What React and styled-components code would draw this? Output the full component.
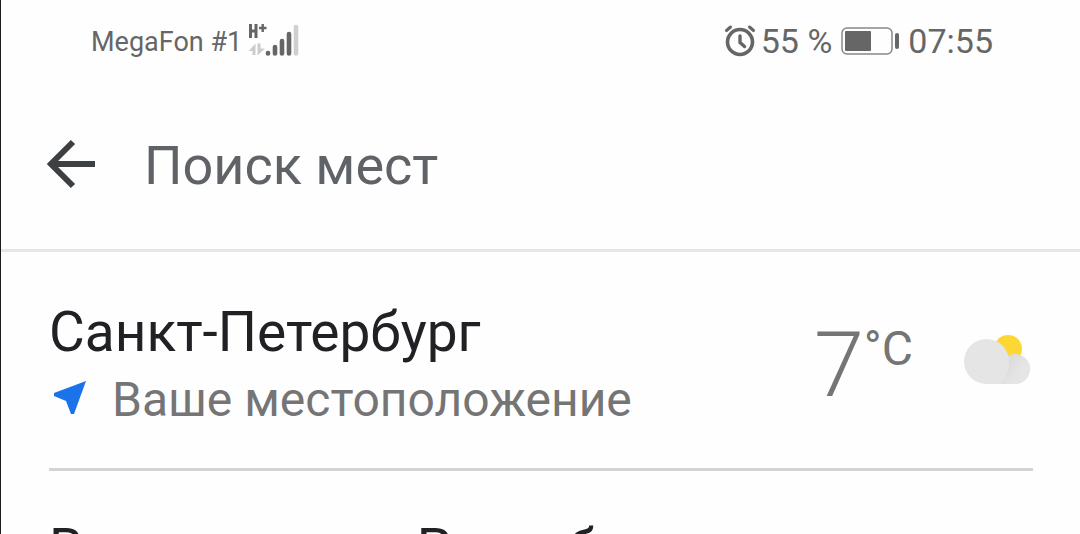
import React from "react";
import styled, { createGlobalStyle } from "styled-components";

const GlobalStyle = createGlobalStyle`
  * {
    box-sizing: border-box;
  }
  body {
    margin: 0;
    background: #fefefe;
    font-family: Roboto, sans-serif;
    overflow: hidden;
  }
`;

const Container = styled.div`
  height: 100vh;
  overflow: hidden;
  border-left: 1px solid #1b1b1b;
`;

const StatusBar = styled.div`
  display: flex;
  justify-content: space-between;
  align-items: center;
  height: 80px;
  padding: 2px 87px 0 90px;
  color: #666;
`;

const StatusGroup = styled.div`
  display: flex;
  align-items: center;
  gap: ${(props) => props.$gap}px;
`;

const Carrier = styled.span`
  padding-top: 2px;
  font-size: 27px;
`;

const StatusText = styled.span`
  font-size: 34px;
`;

const Header = styled.header`
  display: flex;
  align-items: center;
  gap: 48px;
  height: 172px;
  padding: 0 48px 2px 45px;
  border-bottom: 3px solid #e6e6e6;
`;

const BackButton = styled.button`
  display: flex;
  padding: 0;
  border: none;
  background: none;
`;

const SearchInput = styled.input`
  flex: 1;
  min-width: 0;
  padding: 4px 0 0;
  border: none;
  outline: none;
  background: none;
  font-family: Roboto, sans-serif;
  font-size: 54px;
  color: #5f6368;
  &::placeholder {
    color: #5f6368;
    opacity: 1;
  }
`;

const PlaceList = styled.main`
  padding: 0 47px 0 48px;
`;

const Place = styled.section`
  display: flex;
  justify-content: space-between;
  height: 219px;
  padding-top: 46px;
  border-bottom: 3px solid #d4d4d4;
`;

const Title = styled.h2`
  margin: 0;
  font-size: 55px;
  line-height: 68px;
  font-weight: 400;
  color: #202124;
  white-space: nowrap;
`;

const Location = styled.div`
  display: flex;
  align-items: center;
  gap: 25px;
  padding-left: 4px;
  font-size: 48px;
  line-height: 68px;
  color: #757575;
`;

const Weather = styled.div`
  display: flex;
  align-items: flex-start;
  padding-right: 2px;
  color: #757575;
`;

const Degrees = styled.span`
  font-size: 90px;
  line-height: 136px;
  font-weight: 300;
`;

const Unit = styled.span`
  font-size: 48px;
  line-height: 102px;
`;

const WeatherIcon = styled.svg`
  margin: 36px 0 0 50px;
`;

const NextPlace = styled.section`
  padding-top: 44px;
`;

const App = () => {
  return (
    <Container>
      <GlobalStyle />
      <StatusBar>
        <StatusGroup $gap={6}>
          <Carrier>MegaFon #1</Carrier>
          <svg width="51" height="36" viewBox="0 0 51 36" fill="none">
            <path d="M2.500 1V15M8 1V15M3 8H8" stroke="#666" strokeWidth="3" />
            <path d="M11 5H18.500M14.700 1V9" stroke="#666" strokeWidth="2.400" />
            <path d="M0.500 28L7.500 20.500V32H4.500V28ZM9.500 20.500H12.500V25.500H17L9.500 32.500Z" fill="#ccc" />
            <g stroke="#666" strokeWidth="4.600" strokeLinecap="round">
              <path d="M20 30V30.400M27 24V30.400M34 18V30.400M41 11V30.400" />
              <path d="M48 4V30.400" stroke="#d0d0d0" />
            </g>
          </svg>
        </StatusGroup>
        <StatusGroup $gap={8}>
          <StatusGroup $gap={5}>
            <svg width="32" height="34" viewBox="0 0 32 34" fill="none" stroke="#666" strokeLinecap="round">
              <circle cx="16" cy="18" r="12.500" strokeWidth="3.600" />
              <path d="M2.500 6.500L6.500 3M25.500 3L29.500 6.500" strokeWidth="3" />
              <path d="M16 12V18.500L20.500 22.500" strokeWidth="3.400" />
            </svg>
            <StatusText>55 %</StatusText>
          </StatusGroup>
          <svg width="60" height="28" viewBox="0 0 60 28" fill="none">
            <rect x="2" y="1" width="50" height="26" rx="5" stroke="#888" strokeWidth="1.500" />
            <rect x="5" y="4" width="26" height="20" rx="1" fill="#666" />
            <rect x="55" y="6" width="4" height="16" rx="2" fill="#666" />
          </svg>
          <StatusText>07:55</StatusText>
        </StatusGroup>
      </StatusBar>
      <Header>
        <BackButton aria-label="Назад">
          <svg width="50" height="50" viewBox="0 0 50 50" fill="none" stroke="#3c4043" strokeWidth="6">
            <path d="M49 25H6M27 3L5 25L27 47" />
          </svg>
        </BackButton>
        <SearchInput type="text" aria-label="Поиск мест" placeholder="Поиск мест" />
      </Header>
      <PlaceList>
        <Place>
          <div>
            <Title>Санкт-Петербург</Title>
            <Location>
              <svg width="34" height="38" viewBox="0 0 34 38">
                <path d="M33 0L21 33H18L13 20L1 15V12Z" fill="#1a73e8" />
              </svg>
              Ваше местоположение
            </Location>
          </div>
          <Weather>
            <Degrees>7</Degrees>
            <Unit>°C</Unit>
            <WeatherIcon width="68" height="52" viewBox="0 0 68 52">
              <defs>
                <linearGradient id="cloudShade" gradientUnits="userSpaceOnUse" x1="42" y1="28" x2="56" y2="38">
                  <stop offset="0" stopColor="#dadada" />
                  <stop offset="1" stopColor="#e5e5e5" />
                </linearGradient>
              </defs>
              <circle cx="45" cy="15" r="14" fill="#fdd835" />
              <path d="M23 50H52A15 15 0 1 0 38 30Z" fill="url(#cloudShade)" />
              <path d="M23.500 5a22.500 22.500 0 1 0 0 45H37C43 45 46 36 46 27.500A22.500 22.500 0 0 0 23.500 5Z" fill="#e5e5e5" />
            </WeatherIcon>
          </Weather>
        </Place>
        <NextPlace>
          <Title>Ваши места и Республика</Title>
        </NextPlace>
      </PlaceList>
    </Container>
  );
};

export default App;
